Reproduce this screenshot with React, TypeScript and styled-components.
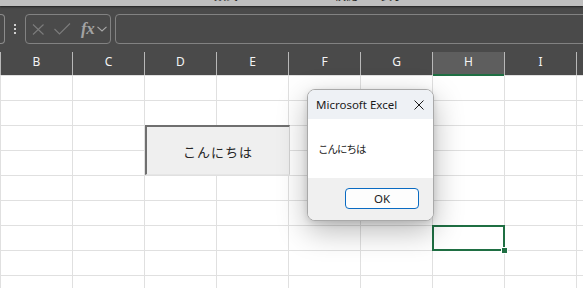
import React from "react";
import styled, { createGlobalStyle } from "styled-components";

const GlobalStyle = createGlobalStyle`
  html, body { margin: 0; padding: 0; background: #ffffff; overflow: hidden; }
  body { font-family: "Noto Sans", "Noto Sans CJK JP", sans-serif; }
  * { box-sizing: border-box; }
`;

const Screen = styled.div`
  position: relative;
  width: 583px;
  height: 288px;
  overflow: hidden;
  background: #ffffff;
`;

const RibbonEdge = styled.div`
  position: relative;
  z-index: 1;
  height: 6px;
  background: #bfbfbf;
  overflow: hidden;
  display: flex;
  box-shadow: 0 1px 2px rgba(0, 0, 0, 0.55);
`;

const RibbonTab = styled.span<{ $left: number }>`
  margin-left: ${(p) => p.$left}px;
  margin-top: -12px;
  font-size: 12px;
  line-height: 16px;
  color: #262626;
  white-space: nowrap;
`;

const FormulaBar = styled.div`
  height: 44px;
  padding: 8px 0 6px;
  background: #4a4a4a;
  display: flex;
  align-items: stretch;
`;

const NameBox = styled.div`
  width: 5px;
  border: 1px solid #8c8c8c;
  border-left: none;
  border-radius: 0 4px 4px 0;
`;

const Grip = styled.div`
  margin-left: 9px;
  width: 2px;
  display: flex;
  flex-direction: column;
  justify-content: center;
  gap: 2px;
`;

const GripDot = styled.span`
  width: 2px;
  height: 2px;
  background: #d0d0d0;
`;

const FuncBox = styled.div`
  margin-left: 9px;
  width: 86px;
  border: 1px solid #828282;
  border-radius: 4px;
  display: flex;
  align-items: center;
  padding-left: 6px;
`;

const IconSlot = styled.span<{ $w: number; $ml?: number }>`
  display: flex;
  width: ${(p) => p.$w}px;
  margin-left: ${(p) => p.$ml ?? 0}px;
`;

const Fx = styled.span`
  margin-left: 10px;
  font-family: "Liberation Serif", "DejaVu Serif", serif;
  font-style: italic;
  font-weight: bold;
  font-size: 17px;
  line-height: 16px;
  color: #a3a3a3;
  letter-spacing: -0.5px;
`;

const FormulaInput = styled.div`
  margin-left: 4px;
  margin-right: -10px;
  flex: 1;
  border: 1px solid #828282;
  border-radius: 4px;
`;

const Sheet = styled.div`
  position: relative;
`;

const HeaderRow = styled.div`
  height: 25px;
  padding-top: 2px;
  background: #4a4a4a;
  display: flex;
`;

const HeaderCell = styled.div<{ $selected?: boolean }>`
  position: relative;
  flex: 0 0 72px;
  height: 23px;
  border-left: 1px solid #b8b8b8;
  background: ${(p) => (p.$selected ? "#5e5e5e" : "transparent")};
  color: #f4f4f4;
  font-size: 12px;
  display: flex;
  align-items: center;
  justify-content: center;
  padding-bottom: 5px;
  &::after {
    content: "";
    display: ${(p) => (p.$selected ? "block" : "none")};
    position: absolute;
    left: 0;
    right: 0;
    bottom: -1px;
    height: 2px;
    background: #1f6f43;
  }
`;

const GridRow = styled.div`
  display: flex;
  height: 25px;
`;

const Cell = styled.div`
  flex: 0 0 72px;
  border-left: 1px solid #e0e0e0;
  border-top: 1px solid #e0e0e0;
`;

const FormButton = styled.div`
  position: absolute;
  left: 145px;
  top: 75px;
  width: 145px;
  height: 50px;
  background: #efefef;
  border-top: 2px solid #6f6f6f;
  border-left: 2px solid #6f6f6f;
  border-right: 1px solid #d2d2d2;
  border-bottom: 1px solid #e6e6e6;
  display: flex;
  align-items: center;
  justify-content: center;
  font-family: "Noto Sans CJK JP", sans-serif;
  font-size: 13px;
  letter-spacing: 1px;
  color: #262626;
  padding-top: 1px;
`;

const Selection = styled.div`
  position: absolute;
  left: 432px;
  top: 175px;
  width: 73px;
  height: 26px;
  border: 2px solid #1f6f43;
`;

const FillHandle = styled.span`
  position: absolute;
  right: -4px;
  bottom: -4px;
  width: 5px;
  height: 5px;
  background: #1f6f43;
  box-shadow: 0 0 0 1px #ffffff;
`;

const Dialog = styled.div`
  position: absolute;
  left: 307px;
  top: 89px;
  width: 127px;
  height: 132px;
  border: 1px solid #a9a9a9;
  border-radius: 8px;
  overflow: hidden;
  background: #ffffff;
  box-shadow: 0 10px 30px rgba(0, 0, 0, 0.28), 0 2px 6px rgba(0, 0, 0, 0.12);
  display: flex;
  flex-direction: column;
`;

const TitleBar = styled.div`
  height: 29px;
  background: #eef1f5;
  display: flex;
  align-items: center;
  padding-left: 8px;
  padding-right: 9px;
`;

const Title = styled.span`
  flex: 1;
  font-family: "Noto Sans", sans-serif;
  font-size: 11.5px;
  color: #1b1b1b;
  white-space: nowrap;
`;

const Body = styled.div`
  height: 59px;
  display: flex;
  align-items: center;
  padding: 0 0 0 10px;
  font-family: "Noto Sans CJK JP", sans-serif;
  font-size: 10.5px;
  letter-spacing: -1px;
  color: #1b1b1b;
`;

const Footer = styled.div`
  flex: 1;
  background: #f0f0f0;
  display: flex;
  align-items: center;
  justify-content: flex-end;
  padding-right: 14px;
  padding-bottom: 1px;
`;

const OkButton = styled.div`
  width: 74px;
  height: 21px;
  border: 1px solid #0a6bc2;
  border-radius: 4px;
  background: #fdfdfd;
  display: flex;
  align-items: center;
  justify-content: center;
  font-family: "Noto Sans", sans-serif;
  font-size: 11.5px;
  color: #1b1b1b;
`;

const columns = ["B", "C", "D", "E", "F", "G", "H", "I", "J"];
const rows = Array.from({ length: 9 }, (_, i) => i);

export default function App() {
  return (
    <>
      <GlobalStyle />
      <Screen>
        <RibbonEdge>
          <RibbonTab $left={214}>数式</RibbonTab>
          <RibbonTab $left={96}>校閲</RibbonTab>
          <RibbonTab $left={22}>表示</RibbonTab>
        </RibbonEdge>
        <FormulaBar>
          <NameBox />
          <Grip>
            <GripDot />
            <GripDot />
            <GripDot />
          </Grip>
          <FuncBox>
            <IconSlot $w={13}>
              <svg width="13" height="11" viewBox="0 0 13 11">
                <path d="M1 0.5 L11.5 10.5 M11.5 0.5 L1 10.5" stroke="#7c7c7c" strokeWidth="1.1" fill="none" />
              </svg>
            </IconSlot>
            <IconSlot $w={17} $ml={9}>
              <svg width="17" height="12" viewBox="0 0 17 12">
                <path d="M0.5 6 L5.5 11 L16 0.5" stroke="#7c7c7c" strokeWidth="1.1" fill="none" />
              </svg>
            </IconSlot>
            <Fx>fx</Fx>
            <IconSlot $w={10} $ml={3}>
              <svg width="10" height="6" viewBox="0 0 10 6">
                <path d="M0.5 0.8 L5 5 L9.5 0.8" stroke="#a8a8a8" strokeWidth="1.1" fill="none" />
              </svg>
            </IconSlot>
          </FuncBox>
          <FormulaInput />
        </FormulaBar>
        <Sheet>
          <HeaderRow>
            {columns.map((c) => (
              <HeaderCell key={c} $selected={c === "H"}>
                {c}
              </HeaderCell>
            ))}
          </HeaderRow>
          {rows.map((r) => (
            <GridRow key={r}>
              {columns.map((c) => (
                <Cell key={c} />
              ))}
            </GridRow>
          ))}
          <FormButton>こんにちは</FormButton>
          <Selection>
            <FillHandle />
          </Selection>
        </Sheet>
        <Dialog>
          <TitleBar>
            <Title>Microsoft Excel</Title>
            <svg width="10" height="10" viewBox="0 0 10 10">
              <path d="M0.5 0.5 L9.5 9.5 M9.5 0.5 L0.5 9.5" stroke="#1b1b1b" strokeWidth="1" fill="none" />
            </svg>
          </TitleBar>
          <Body>こんにちは</Body>
          <Footer>
            <OkButton>OK</OkButton>
          </Footer>
        </Dialog>
      </Screen>
    </>
  );
}
